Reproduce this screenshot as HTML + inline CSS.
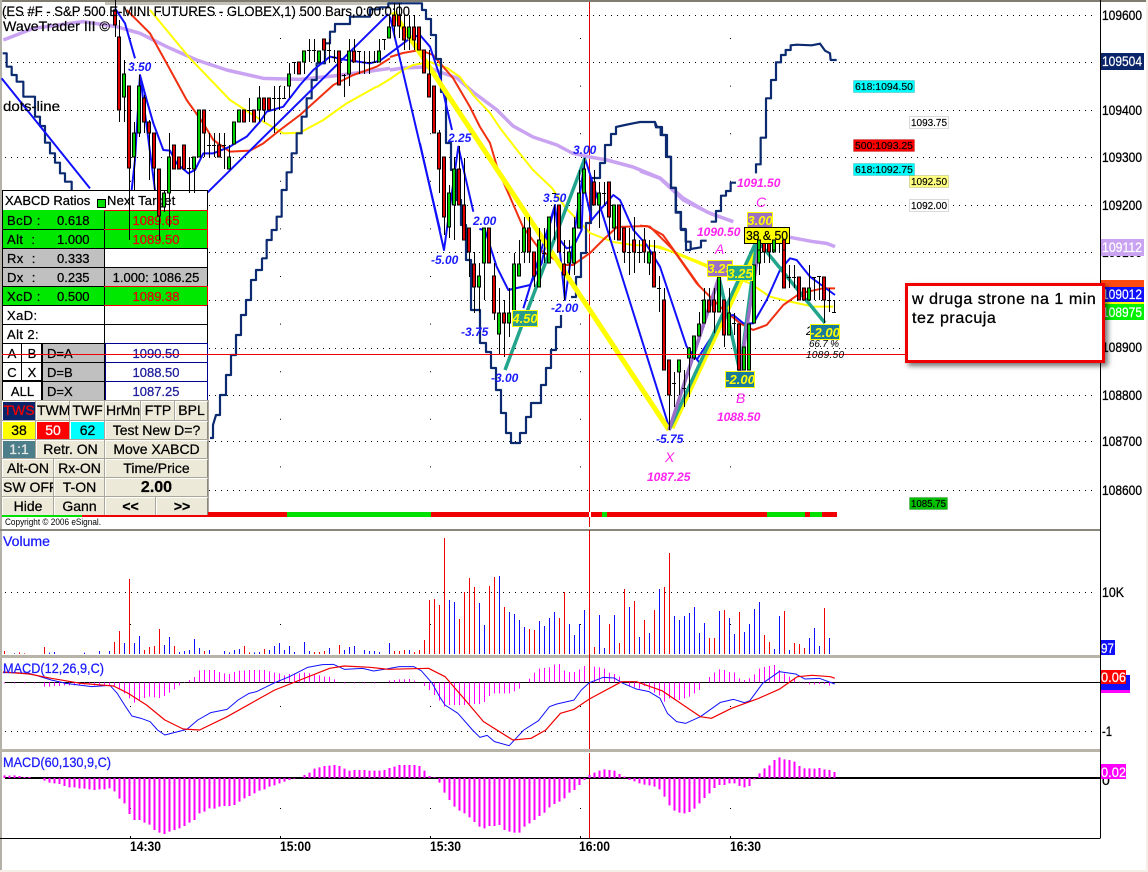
<!DOCTYPE html>
<html><head><meta charset="utf-8"><title>Chart</title>
<style>
html,body{margin:0;padding:0;background:#fff}
#p{position:relative;width:1148px;height:872px;overflow:hidden;background:#fff;font-family:"Liberation Sans",sans-serif;color:#000}
svg{position:absolute;left:0;top:0}
svg text{font-family:"Liberation Sans",sans-serif}
.l{vector-effect:non-scaling-stroke;fill:none;stroke-linejoin:round}
.c,.r,.b,.t{position:absolute;box-sizing:border-box;font-size:13px;line-height:18px;white-space:nowrap;-webkit-text-stroke:.25px #000}
.c{text-align:center}
.r{border:1px solid #000;border-width:0 0 1px 0}
.b{background:#ece9d8;border:1px solid;border-color:#fff #8a887c #8a887c #fff;text-align:center;overflow:hidden;outline:1px solid #aaa79a;outline-offset:0;font-size:14px;line-height:17px}
</style></head><body><div id="p">
<svg width="1148" height="872" viewBox="0 0 1148 872">
<rect x="0" y="0" width="1148" height="2" fill="#807c70"/>
<rect x="105" y="2" width="297" height="3" fill="#c4c2b8"/>
<rect x="0" y="0" width="2" height="872" fill="#b4b2a8"/>
<rect x="1146" y="0" width="2" height="872" fill="#f6efe8"/>
<rect x="0" y="870" width="1148" height="2" fill="#f6efe8"/>
<g stroke="#000" stroke-width="1" stroke-dasharray="1 5" fill="none">
<path d="M5 62.5H1095M5 110.5H1095M5 157.5H1095M5 205.5H1095M5 252.5H1095M5 300.5H1095M5 348.5H1095M5 395.5H1095M5 441.5H1095M5 490.5H1095M5 15.5H1095M5 592.5H1095M5 731.5H1095"/>
</g>
<g stroke="#000" stroke-width="1" stroke-dasharray="1 46.6" fill="none">
<path d="M130.5 38V510M280.5 38V510M430.5 38V510M580.5 38V510M730.5 38V510"/>
</g>
<path d="M130.5 624v1M280.5 624v1M430.5 624v1M580.5 624v1M730.5 624v1M130.5 706v1M280.5 706v1M430.5 706v1M580.5 706v1M730.5 706v1M130.5 808v1M280.5 808v1M430.5 808v1M580.5 808v1M730.5 808v1M130.5 836v2M280.5 836v2M430.5 836v2M580.5 836v2M730.5 836v2" stroke="#000"/>
<!-- panes -->
<rect x="0" y="529" width="1100" height="2" fill="#8a887c"/>
<rect x="0" y="655" width="1100" height="3" fill="#b8b5a8"/>
<rect x="0" y="749" width="1100" height="3" fill="#b8b5a8"/>
<path d="M0 838.5H1100.5M1100.5 0V838" stroke="#000" fill="none"/>
<path d="M589.5 2V527M589.5 530V749M589.5 753V838" stroke="#e00000"/>
<path d="M5 682.5H1100" stroke="#000"/>
<rect x="5" y="777" width="1095" height="2" fill="#000"/>

<!-- lavender MA -->
<g transform="scale(.33333)"><path class="l" stroke="#c9a2f2" stroke-width="3.5" d="M10 120L100 85 250 65 350 80 420 100 500 140 590 180 680 210 790 235 900 238 1000 228 1100 215 1170 205"/></g>
<path class="l" stroke="#c9a2f2" stroke-width="3.5" d="M390 70L403 68 427 67 440 72 457 78 473 92 497 110 513 126 533 137 557 145 572 153 590 157 607 160 633 167 660 178 683 198 707 212 720 217"/>
<g transform="translate(640 30) scale(.33333)"><path class="l" stroke="#c9a2f2" stroke-width="3.5" d="M0 423L60 445 130 510 210 550 280 575M450 622L520 635 560 640 585 650"/></g>
<!-- yellow MA -->
<g transform="scale(.33333)"><path class="l" stroke="#ffff00" stroke-width="2" d="M450 30L570 175 690 300 790 365 850 400 900 398 970 360 1040 310 1130 260"/></g>
<path class="l" stroke="#ffff00" stroke-width="2" d="M377 87L390 79 403 70 413 65 430 62 447 68 460 77 473 95 490 113 500 128 517 150 533 170 552 188 565 207 590 233 613 242 633 245 653 246 677 253 707 265"/>
<g transform="translate(640 30) scale(.33333)"><path class="l" stroke="#ffff00" stroke-width="2" d="M0 645L60 650 130 680 200 710 330 760 390 800 450 815 520 830 580 830"/></g>
<!-- orange MA -->
<g transform="scale(.33333)"><path class="l" stroke="#f03010" stroke-width="2" d="M380 30L450 100 500 190 560 300 610 370 640 420 690 455 750 452 790 430 840 390 900 345 950 300 1000 255 1060 225 1130 200 1170 175"/></g>
<path class="l" stroke="#f03010" stroke-width="2" d="M390 57L403 53 420 50 433 55 453 78 470 107 480 127 490 143 498 170 510 197 523 227 540 250 563 265 573 265 590 253 603 240 617 227 647 226 663 235 683 263 700 287"/>
<g transform="translate(640 30) scale(.33333)"><path class="l" stroke="#f03010" stroke-width="2" d="M0 587L30 590 100 660 170 760 240 830 300 880 340 900 380 885 430 825 480 790 550 775 585 775"/></g>
<!-- navy stepped -->
<g transform="scale(.33333)"><path class="l" stroke="#0c2a70" stroke-width="2.2" d="M8 160H20V200H35V225H50V245H70V290H105V350H120V378H135V428H150V460H165V488H180V520H195V545H215V570M785 775H800V720H815V690H830V650H845V570H860V517H875V460H890V400H905V350H920V295H935V240H950V190H975V130H990V95H1005V72H1050V50H1110V28H1140V22H1165V10H1266V30H1278V57H1293V105H1308V177H1323V276H1338"/></g>
<path class="l" stroke="#0c2a70" stroke-width="2.2" d="M210 438H213V425L216 415H220V395H226V375H231V355H236V335H241V315H246V300H251V280H256V270H262V258"/>
<path class="l" stroke="#0c2a70" stroke-width="2.2" d="M446 92V143H451V170H456V200H461V225H466V260H471V310H480V343H486V352H491V368H496V390H501V413H506V433H511V443H520V433H526V417H531V403H541V385H546V368H551V350H556V327H561V315M571 297H576V277H581V253H586V223H591V178H600V163H605V145H611V134H616V127L625 125 640 122H655L657 127H662V135H667V157H671V188H676V212H681V230H686V250H691V250"/>
<g transform="translate(640 30) scale(.33333)"><path class="l" stroke="#0c2a70" stroke-width="2.2" d="M45 280L48 292H62V315H78V380H93V473H107V548H122V597H137V635H152V657L183 652V632H200M212 575H228V543H243V497H258V483H272V458H288M348 430V403H362V323H378V205H393V150H408V97H423V75H437V60H452V46L470 44 515 46 540 41 555 62 570 70 572 90H590"/></g>
<!-- blue zigzag / MA -->
<g transform="scale(.33333)"><path class="l" stroke="#1010ff" stroke-width="2" d="M5 235L270 565M622 578L1165 42M345 25L375 70 405 175M420 225L465 570M395 570L405 480 420 225 440 300 460 370 490 450 510 452 530 490 565 520 585 510 610 460 640 460 690 440 705 430 740 410 780 365 800 335 850 320 900 255 940 210 990 170 1040 180 1110 190 1140 182 1170 160 1230 115 1260 105 1290 140 1320 230 1335 300 1356 390M1170 50L1320 690"/></g>
<g transform="translate(420 130) scale(.33333)"><path class="l" stroke="#1010ff" stroke-width="2" d="M0 40L72 360 115 50 160 245M178 297L195 300 230 410 265 480 330 465 365 400 385 300 405 230 420 330 440 355 460 350 485 300 490 160 515 270 540 240 580 195 600 210 640 300 680 345 720 410 760 530 800 650 840 700M310 535L405 225 435 510 495 85 750 900"/></g>
<g transform="translate(640 30) scale(.33333)"><path class="l" stroke="#1010ff" stroke-width="2" d="M90 1195L240 740M170 990L215 920 250 860 280 855 310 880 340 880 380 810 420 720 450 685 470 690 510 740 585 795"/></g>
<!-- pattern lines -->
<path class="l" stroke="#ffff00" stroke-width="5" d="M393 12L669 430"/>
<path class="l" stroke="#ffff00" stroke-width="5" d="M672 428L758 245"/>
<path class="l" stroke="#22a58c" stroke-width="3.5" d="M505 370L585 158M669 430L757 240M719 277L740 372 757 240M757 240L825 323"/>
<path class="l" stroke="#9b6fc4" stroke-width="3.5" d="M669 430L719 277M740 372L760 240"/>
</svg>

<!-- table -->
<div style="position:absolute;left:2px;top:190px;width:206px;height:211px;background:#fff;border:1px solid #000;box-sizing:border-box"></div>
<div class="t" style="left:5px;top:192px">XABCD Ratios</div>
<div style="position:absolute;left:97px;top:199px;width:7px;height:7px;background:#00e000;border:1px solid #000"></div>
<div class="t" style="left:107px;top:192px;letter-spacing:.2px">Next Target</div>
<div style="position:absolute;left:3px;top:210px;width:101px;height:38px;background:#00e800"></div>
<div style="position:absolute;left:105px;top:210px;width:102px;height:38px;background:#00e800"></div>
<div style="position:absolute;left:3px;top:248px;width:101px;height:38px;background:#c0c0c0"></div>
<div style="position:absolute;left:105px;top:267px;width:102px;height:19px;background:#c0c0c0"></div>
<div style="position:absolute;left:3px;top:286px;width:101px;height:19px;background:#00e800"></div>
<div style="position:absolute;left:105px;top:286px;width:102px;height:19px;background:#00e800"></div>
<div style="position:absolute;left:43px;top:343px;width:61px;height:57px;background:#c0c0c0"></div>
<svg width="1148" height="872" viewBox="0 0 1148 872">
<path d="M3 229.5H104M3 248.5H207M3 267.5H207M3 286.5H207M3 305.5H207M3 324.5H207M3 343.5H207M3 362.5H104M3 381.5H104M3 400.5H207M104.5 210V400M21.5 343V381" stroke="#000" fill="none"/>
<path d="M104 210.5H207M104 229.5H207M104 286.5H207M104 305.5H207M207.5 210V248M207.5 286V305" stroke="#f00000" fill="none"/>
<path d="M105 343.5H207M105 362.5H207M105 381.5H207M105 400.5H207M207.5 343V400M105.5 343V400" stroke="#00008b" fill="none"/>
<path d="M42 343V400M3 381H42" stroke="#000" stroke-width="2" fill="none"/>
</svg>
<div class="t" style="left:7px;top:212px;letter-spacing:.4px">BcD :</div><div class="t" style="left:57px;top:212px">0.618</div>
<div class="t" style="left:7px;top:231px;letter-spacing:.4px">Alt&nbsp;&nbsp;:</div><div class="t" style="left:57px;top:231px">1.000</div>
<div class="t" style="left:7px;top:250px;letter-spacing:.4px">Rx&nbsp;&nbsp;:</div><div class="t" style="left:57px;top:250px">0.333</div>
<div class="t" style="left:7px;top:269px;letter-spacing:.4px">Dx&nbsp;&nbsp;:</div><div class="t" style="left:57px;top:269px">0.235</div>
<div class="t" style="left:7px;top:288px;letter-spacing:.4px">XcD :</div><div class="t" style="left:57px;top:288px">0.500</div>
<div class="t" style="left:7px;top:307px;letter-spacing:.4px">XaD:</div>
<div class="t" style="left:7px;top:326px;letter-spacing:.4px">Alt 2:</div>
<div class="c" style="left:105px;width:102px;top:212px;color:#f00000;-webkit-text-stroke:.25px #e00000">1089.65</div>
<div class="c" style="left:105px;width:102px;top:231px;color:#f00000;-webkit-text-stroke:.25px #e00000">1089.50</div>
<div class="c" style="left:105px;width:102px;top:269px">1.000: 1086.25</div>
<div class="c" style="left:105px;width:102px;top:288px;color:#f00000;-webkit-text-stroke:.25px #e00000">1089.38</div>
<div class="c" style="left:105px;width:102px;top:345px;color:#1a1a9a;-webkit-text-stroke:.25px #1a1a9a">1090.50</div>
<div class="c" style="left:105px;width:102px;top:364px;color:#1a1a9a;-webkit-text-stroke:.25px #1a1a9a">1088.50</div>
<div class="c" style="left:105px;width:102px;top:383px;color:#1a1a9a;-webkit-text-stroke:.25px #1a1a9a">1087.25</div>
<div class="c" style="left:3px;width:18px;top:345px">A</div><div class="c" style="left:22px;width:20px;top:345px">B</div>
<div class="c" style="left:3px;width:18px;top:364px">C</div><div class="c" style="left:22px;width:20px;top:364px">X</div>
<div class="c" style="left:3px;width:39px;top:383px">ALL</div>
<div class="t" style="left:47px;top:345px">D=A</div><div class="t" style="left:47px;top:364px">D=B</div><div class="t" style="left:47px;top:383px">D=X</div>

<!-- buttons -->
<div class="b" style="left:2px;top:401px;width:34px;height:20px;background:#0a246a;color:#f00000;-webkit-text-stroke:.25px #f00000">TWS</div>
<div class="b" style="left:36px;top:401px;width:34px;height:20px">TWM</div>
<div class="b" style="left:70px;top:401px;width:35px;height:20px">TWF</div>
<div class="b" style="left:105px;top:401px;width:36px;height:20px">HrMn</div>
<div class="b" style="left:141px;top:401px;width:34px;height:20px">FTP</div>
<div class="b" style="left:175px;top:401px;width:33px;height:20px">BPL</div>
<div class="b" style="left:2px;top:421px;width:34px;height:19px;background:#ffff00">38</div>
<div class="b" style="left:36px;top:421px;width:34px;height:19px;background:#ff0000;color:#fff;-webkit-text-stroke:.25px #fff">50</div>
<div class="b" style="left:70px;top:421px;width:35px;height:19px;background:#00ffff">62</div>
<div class="b" style="left:105px;top:421px;width:103px;height:19px">Test New D=?</div>
<div class="b" style="left:2px;top:440px;width:34px;height:19px;background:#4d7f8a;color:#e8e8e8;-webkit-text-stroke:.25px #e8e8e8">1:1</div>
<div class="b" style="left:36px;top:440px;width:69px;height:19px">Retr. ON</div>
<div class="b" style="left:105px;top:440px;width:103px;height:19px">Move XABCD</div>
<div class="b" style="left:2px;top:459px;width:52px;height:19px">Alt-ON</div>
<div class="b" style="left:54px;top:459px;width:51px;height:19px">Rx-ON</div>
<div class="b" style="left:105px;top:459px;width:103px;height:19px">Time/Price</div>
<div class="b" style="left:2px;top:478px;width:52px;height:19px">SW OFF</div>
<div class="b" style="left:54px;top:478px;width:51px;height:19px">T-ON</div>
<div class="b" style="left:105px;top:478px;width:103px;height:19px;font-size:16px;font-weight:bold">2.00</div>
<div class="b" style="left:2px;top:497px;width:52px;height:19px">Hide</div>
<div class="b" style="left:54px;top:497px;width:51px;height:19px">Gann</div>
<div class="b" style="left:105px;top:497px;width:51px;height:19px;font-weight:bold">&lt;&lt;</div>
<div class="b" style="left:156px;top:497px;width:52px;height:19px;font-weight:bold">&gt;&gt;</div>

<svg width="1148" height="872" viewBox="0 0 1148 872">
<!-- candles -->
<path stroke="#000" fill="none" d="M115.5 0V37M119.5 20V122M124.5 60V122M129.5 86V240M134.5 122V190M139.5 75V137M144.5 95V133M149.5 120V180M154.5 133V190M159.5 169V240M164.5 190V212M169.5 133V227M174.5 145V169M179.5 157V169M184.5 145V169M189.5 157V193M194.5 157V193M199.5 110V157M204.5 110V157M209.5 133V157M214.5 133V157M219.5 133V157M224.5 133V169M229.5 145V169M234.5 122V144M239.5 110V122M244.5 110V122M249.5 98V122M254.5 110V122M259.5 86V122M264.5 98V122M269.5 98V110M274.5 86V133M279.5 86V110M284.5 86V98M289.5 63V98M294.5 62V74M299.5 62V74M304.5 51V74M309.5 39V62M314.5 39V62M319.5 51V62M324.5 39V62M329.5 39V62M334.5 50V62M339.5 51V85M344.5 74V97M349.5 39V86M354.5 39V62M359.5 51V74M364.5 51V74M369.5 51V74M374.5 51V62M379.5 39V62M384.5 39V50M389.5 15V38M394.5 3V38M399.5 3V38M404.5 15V50M409.5 15V50M414.5 15V50M419.5 27V50M424.5 50V73M429.5 50V97M434.5 86V133M439.5 130V193M444.5 157V235M449.5 185V238M454.5 157V240M459.5 146V205M464.5 158V240M469.5 228V277M474.5 252V313M479.5 263V313M484.5 228V300M489.5 228V263M494.5 263V320M499.5 288V355M504.5 300V357M509.5 288V337M514.5 253V323M519.5 240V276M524.5 217V263M529.5 217V263M534.5 252V287M539.5 228V287M544.5 228V263M549.5 217V263M554.5 205V240M559.5 205V252M564.5 240V300M569.5 240V275M574.5 217V275M579.5 170V228M584.5 158V193M594.5 170V205M599.5 182V228M604.5 182V205M609.5 182V240M614.5 205V240M619.5 205V240M624.5 228V263M629.5 228V275M634.5 217V273M639.5 240V263M644.5 228V263M649.5 240V275M654.5 240V287M659.5 276V312M664.5 288V370M669.5 360V430M674.5 372V407M679.5 360V395M684.5 370V407M689.5 347V397M694.5 336V360M699.5 312V336M704.5 288V323M709.5 288V312M714.5 288V333M719.5 277V312M724.5 300V347M729.5 288V335M734.5 313V335M739.5 324V370M744.5 347V370M749.5 324V370M754.5 265V323M759.5 230V275M764.5 228V263M769.5 240V263M774.5 240V252M779.5 228V252M784.5 240V288M789.5 265V288M794.5 265V288M799.5 277V300M804.5 288V300M809.5 265V300M814.5 277V300M819.5 276V300M824.5 277V323M829.5 288V312M834.5 300V312"/>
<path stroke="#000" fill="#e00000" d="M113.5 10h3v15h-3zM117.5 37h3v73h-3zM127.5 86h3v82h-3zM142.5 98h3v24h-3zM147.5 122h3v11h-3zM152.5 133h3v35h-3zM157.5 169h3v47h-3zM172.5 145h3v24h-3zM177.5 157h3v12h-3zM182.5 145h3v24h-3zM202.5 110h3v23h-3zM217.5 145h3v12h-3zM242.5 110h3v12h-3zM252.5 110h3v12h-3zM262.5 98h3v12h-3zM267.5 98h3v12h-3zM297.5 62h3v12h-3zM322.5 39h3v11h-3zM337.5 51h3v34h-3zM352.5 51h3v11h-3zM392.5 15h3v11h-3zM397.5 15h3v11h-3zM402.5 27h3v13h-3zM412.5 27h3v13h-3zM417.5 27h3v23h-3zM422.5 50h3v23h-3zM427.5 74h3v23h-3zM432.5 86h3v47h-3zM437.5 133h3v36h-3zM442.5 157h3v60h-3zM457.5 169h3v36h-3zM462.5 205h3v35h-3zM467.5 228h3v24h-3zM472.5 264h3v23h-3zM487.5 228h3v35h-3zM492.5 276h3v37h-3zM502.5 313h3v10h-3zM527.5 228h3v24h-3zM532.5 252h3v24h-3zM557.5 205h3v47h-3zM562.5 264h3v11h-3zM592.5 182h3v23h-3zM607.5 182h3v35h-3zM617.5 205h3v35h-3zM622.5 228h3v24h-3zM632.5 240h3v12h-3zM642.5 240h3v12h-3zM652.5 252h3v35h-3zM662.5 300h3v70h-3zM667.5 360h3v35h-3zM707.5 300h3v12h-3zM712.5 300h3v12h-3zM722.5 300h3v35h-3zM737.5 324h3v46h-3zM762.5 240h3v12h-3zM767.5 240h3v12h-3zM782.5 240h3v48h-3zM797.5 277h3v23h-3zM802.5 288h3v12h-3zM822.5 277h3v23h-3z"/>
<path stroke="#000" fill="#00d000" d="M122.5 74h3v23h-3zM132.5 133h3v24h-3zM137.5 86h3v47h-3zM162.5 193h3v14h-3zM167.5 157h3v36h-3zM192.5 157h3v12h-3zM197.5 110h3v47h-3zM227.5 157h3v12h-3zM232.5 122h3v22h-3zM237.5 110h3v12h-3zM257.5 98h3v12h-3zM287.5 74h3v12h-3zM302.5 51h3v11h-3zM317.5 51h3v11h-3zM347.5 51h3v23h-3zM377.5 51h3v11h-3zM387.5 27h3v11h-3zM407.5 27h3v11h-3zM447.5 193h3v34h-3zM452.5 169h3v36h-3zM477.5 276h3v11h-3zM482.5 228h3v35h-3zM497.5 313h3v21h-3zM507.5 313h3v10h-3zM512.5 264h3v48h-3zM517.5 264h3v12h-3zM522.5 228h3v24h-3zM537.5 240h3v47h-3zM547.5 217h3v46h-3zM567.5 252h3v11h-3zM572.5 228h3v35h-3zM577.5 193h3v35h-3zM582.5 169h3v24h-3zM597.5 193h3v12h-3zM612.5 205h3v23h-3zM647.5 252h3v11h-3zM677.5 360h3v12h-3zM687.5 348h3v10h-3zM692.5 336h3v22h-3zM697.5 324h3v12h-3zM702.5 300h3v23h-3zM717.5 277h3v35h-3zM727.5 313h3v22h-3zM742.5 347h3v23h-3zM747.5 324h3v46h-3zM752.5 265h3v58h-3zM757.5 240h3v23h-3zM772.5 240h3v12h-3zM807.5 288h3v12h-3z"/>
<path stroke="#000" fill="none" d="M187 168.5h4M207 145.5h4M212 145.5h4M222 145.5h4M247 110.5h4M272 98.5h4M277 98.5h4M282 98.5h4M292 62.5h4M307 50.5h4M312 50.5h4M327 50.5h4M332 57.5h4M342 75.5h4M357 51.5h4M362 62.5h4M367 62.5h4M372 62.5h4M382 39.5h4M542 253.5h4M552 193.5h4M602 193.5h4M627 252.5h4M637 252.5h4M657 288.5h4M672 383.5h4M682 388.5h4M732 323.5h4M777 243.5h4M787 277.5h4M792 277.5h4M812 277.5h4M817 276.5h4M827 300.5h4M832 312.5h4"/>
<!-- red horizontal -->
<path d="M2 354.5H906" stroke="#f00000"/>
<!-- bottom strip -->
<rect x="2" y="515" width="80" height="2" fill="#00e000"/><rect x="82" y="515" width="126" height="2" fill="#f00000"/>
<rect x="208" y="512" width="79" height="5" fill="#f00000"/><rect x="287" y="512" width="144" height="5" fill="#00e000"/><rect x="431" y="512" width="158" height="5" fill="#f00000"/><rect x="589" y="512" width="2" height="5" fill="#fff"/><rect x="591" y="512" width="11" height="5" fill="#f00000"/><rect x="602" y="512" width="5" height="5" fill="#00e000"/><rect x="607" y="512" width="160" height="5" fill="#f00000"/><rect x="767" y="512" width="38" height="5" fill="#00e000"/><rect x="805" y="512" width="5" height="5" fill="#f00000"/><rect x="810" y="512" width="12" height="5" fill="#00e000"/><rect x="822" y="512" width="15" height="5" fill="#f00000"/>
<text x="5" y="525" font-size="9.5" textLength="96" lengthAdjust="spacingAndGlyphs">Copyright © 2006 eSignal.</text>

<!-- volume -->
<g transform="translate(4.5 530) scale(5 .33333)">
<path class="l" stroke="#f00000" stroke-width="1" d="M0 363V372M3 367V372M4 370V372M8 351V372M22 336V372M23 303V372M25 147V372M28 360V372M29 351V372M30 348V372M31 297V372M34 348V372M40 363V372M48 348V372M49 367V372M52 357V372M62 366V372M63 366V372M64 363V372M67 345V372M78 363V372M79 363V372M80 360V372M82 366V372M83 360V372M84 330V372M85 210V372M86 207V372M87 225V372M88 24V372M91 267V372M92 186V372M93 144V372M94 171V372M97 168V372M98 141V372M100 231V372M105 297V372M106 300V372M111 264V372M112 186V372M117 9V372M118 351V372M121 282V372M123 339V372M124 177V372M126 213V372M128 270V372M130 240V372M132 171V372M133 69V372M141 324V372M142 324V372M144 240V372M147 246V372M152 315V372M153 336V372M156 243V372M158 339V372M159 342V372M160 354V372M164 234V372"/>
<path class="l" stroke="#1010ff" stroke-width="1" d="M2 370V372M9 368V372M10 366V372M16 368V372M19 363V372M21 363V372M24 339V372M26 339V372M27 318V372M32 345V372M33 321V372M35 366V372M36 363V372M37 360V372M38 327V372M39 354V372M41 360V372M44 363V372M45 367V372M46 360V372M47 357V372M50 367V372M51 366V372M53 360V372M54 348V372M55 339V372M56 360V372M57 348V372M58 366V372M60 336V372M61 363V372M65 354V372M68 360V372M69 351V372M70 348V372M72 360V372M73 363V372M74 363V372M75 366V372M77 339V372M81 360V372M89 210V372M90 216V372M95 219V372M96 285V372M99 138V372M101 246V372M102 252V372M103 270V372M104 291V372M107 273V372M108 288V372M109 264V372M110 246V372M113 282V372M114 315V372M115 282V372M116 240V372M119 255V372M120 354V372M122 255V372M125 231V372M127 321V372M129 309V372M131 177V372M134 258V372M135 270V372M136 258V372M137 249V372M138 231V372M139 309V372M140 279V372M143 243V372M145 264V372M146 312V372M148 306V372M149 282V372M150 237V372M151 216V372M154 357V372M155 258V372M157 360V372M161 324V372M162 294V372M163 348V372M165 324V372"/>
<!-- macd1 hist -->
<path class="l" stroke="#ff00ff" stroke-width="1" d="M0 460V457M2 460V457M4 460V457M6 460V457M8 470V457M9 470V457M10 468V457M11 468V457M12 466V457M13 466V457M14 466V457M15 466V457M16 464V457M17 464V457M18 466V457M19 466V457M20 466V457M21 466V457M22 470V457M23 478V457M24 490V457M25 505V457M26 518V457M27 510V457M28 504V457M29 500V457M30 502V457M31 504V457M32 498V457M33 488V457M34 478V457M35 466V457M36 459V457M37 450V457M38 441V457M39 421V457M40 420V457M41 420V457M42 420V457M43 426V457M44 430V457M45 432V457M46 426V457M47 422V457M48 422V457M49 420V457M50 420V457M51 420V457M52 420V457M53 424V457M54 428V457M55 430V457M56 436V457M57 432V457M58 430V457M59 430V457M60 428V457M61 430V457M62 434V457M63 436V457M64 440V457M65 440V457M66 448V457M68 460V457M70 460V457M72 460V457M74 460V457M77 452V457M78 450V457M79 448V457M80 448V457M81 447V457M82 452V457M84 468V457M85 480V457M86 495V457M87 512V457M88 530V457M89 525V457M90 525V457M91 525V457M92 525V457M93 522V457M94 522V457M95 522V457M96 516V457M97 498V457M98 490V457M99 490V457M100 490V457M101 490V457M102 484V457M103 476V457M105 446V457M106 428V457M107 416V457M108 414V457M109 412V457M110 404V457M111 402V457M112 422V457M113 426V457M114 426V457M115 418V457M116 408V457M118 410V457M119 412V457M120 416V457M121 428V457M122 432V457M123 440V457M125 470V457M126 472V457M127 476V457M128 468V457M129 478V457M130 488V457M131 496V457M132 515V457M133 505V457M134 510V457M135 510V457M136 505V457M137 500V457M138 490V457M139 480V457M141 441V457M142 428V457M143 418V457M144 420V457M145 426V457M146 428V457M147 445V457M148 450V457M149 445V457M150 433V457M151 416V457M152 411V457M153 408V457M154 405V457M155 420V457M156 430V457M157 440V457M158 445V457M159 455V457M160 460V457M161 463V457M162 464V457M163 462V457M164 462V457M165 467V457"/>
<!-- macd2 hist -->
<path class="l" stroke="#ff00ff" stroke-width="2" d="M0 736V744M1 737V744M2 736V744M3 738V744M4 741V744M5 741V744M8 752V744M9 758V744M10 760V744M11 762V744M12 768V744M13 772V744M14 772V744M15 775V744M16 776V744M17 778V744M18 780V744M19 778V744M20 778V744M21 775V744M22 784V744M23 806V744M24 820V744M25 852V744M26 870V744M27 870V744M28 878V744M29 884V744M30 900V744M31 908V744M32 912V744M33 905V744M34 900V744M35 895V744M36 888V744M37 878V744M38 870V744M39 850V744M40 845V744M41 835V744M42 836V744M43 830V744M44 828V744M45 828V744M46 825V744M47 815V744M48 805V744M49 798V744M50 790V744M51 782V744M52 778V744M53 770V744M54 766V744M55 760V744M56 755V744M57 750V744M58 746V744M60 735V744M61 728V744M62 716V744M63 712V744M64 708V744M65 707V744M66 705V744M67 708V744M68 716V744M69 722V744M70 720V744M71 720V744M72 720V744M73 722V744M74 722V744M75 722V744M76 720V744M77 714V744M78 710V744M79 705V744M80 705V744M81 705V744M82 705V744M83 708V744M84 722V744M85 738V744M86 742V744M87 758V744M88 788V744M89 810V744M90 830V744M91 842V744M92 850V744M93 862V744M94 876V744M95 890V744M96 895V744M97 888V744M98 888V744M99 885V744M100 900V744M101 905V744M102 908V744M103 908V744M104 890V744M105 880V744M106 870V744M107 858V744M108 848V744M109 832V744M110 822V744M111 815V744M112 805V744M113 788V744M114 780V744M115 765V744M116 750V744M117 735V744M118 728V744M119 722V744M120 718V744M121 720V744M122 722V744M123 732V744M124 740V744M125 750V744M126 754V744M127 760V744M128 764V744M129 766V744M130 770V744M131 778V744M132 800V744M133 826V744M134 842V744M135 848V744M136 850V744M137 846V744M138 836V744M139 820V744M140 804V744M141 790V744M142 774V744M143 765V744M144 765V744M145 760V744M146 760V744M147 768V744M148 772V744M149 768V744M150 748V744M151 730V744M152 715V744M153 706V744M154 690V744M155 682V744M156 688V744M157 690V744M158 695V744M159 708V744M160 715V744M161 715V744M162 716V744M163 714V744M164 718V744M165 720V744M166 726V744"/>
</g>
<g transform="translate(0 530) scale(.3663 .33333)">
<path class="l" stroke="#1010ff" stroke-width="1" d="M8 428L40 428 80 430 110 440 140 450 180 460 250 470 300 466 320 490 340 525 360 558 385 565 410 575 430 600 450 615 475 608 510 598 540 570 575 548 620 538 650 510 680 490 700 485 750 458 790 440 840 412 880 404 910 403 940 418 990 415 1020 423 1060 416 1090 410 1130 410 1150 422 1180 460 1200 500 1215 525 1250 550 1290 600 1310 622 1330 616 1350 635 1390 647 1430 600 1470 572 1500 530 1520 522 1568 510"/>
<path class="l" stroke="#f00000" stroke-width="1.2" d="M8 426L80 432 140 445 220 460 310 468 350 490 400 525 450 570 500 597 545 600 620 560 750 480 900 415 940 408 1010 412 1060 418 1170 415 1215 440 1270 510 1320 575 1400 630 1450 625 1490 600 1530 550 1568 538"/>
</g>
<g transform="translate(574 530) scale(.3663 .33333)">
<path class="l" stroke="#1010ff" stroke-width="1" d="M0 510L20 480 42 458 80 442 110 444 130 458 170 477 205 485 235 505 255 550 280 575 305 580 345 560 400 517 435 508 465 518 480 512 515 460 560 425 605 432 630 447 670 445 712 462"/>
<path class="l" stroke="#f00000" stroke-width="1.2" d="M0 538L42 507 130 455 170 455 240 482 345 560 375 565 430 535 500 507 560 478 610 440 650 436 700 440 712 445"/>
</g>

<!-- chart text -->
<g font-size="14" style="stroke:#000;stroke-width:.2">
<text x="2" y="16" textLength="408" lengthAdjust="spacingAndGlyphs">(ES #F - S&amp;P 500 E-MINI FUTURES - GLOBEX,1) 500 Bars,0:00:0:00</text>
<text x="3" y="31" textLength="107" lengthAdjust="spacingAndGlyphs">WaveTrader III ©</text>
<text x="3" y="111" textLength="57" lengthAdjust="spacingAndGlyphs">dots-line</text>
</g>
<g font-size="12" font-style="italic" font-weight="bold" fill="#1a1aff">
<text x="128" y="71">3.50</text><text x="448" y="142">2.25</text><text x="431" y="264">-5.00</text><text x="473" y="225">2.00</text><text x="461" y="336">-3.75</text><text x="491" y="382">-3.00</text><text x="543" y="202">3.50</text><text x="573" y="154">3.00</text><text x="551" y="312">-2.00</text><text x="656" y="443">-5.75</text>
</g>
<g font-size="12" font-style="italic" font-weight="bold" fill="#ff22ee">
<text x="647" y="481">1087.25</text><text x="737" y="187">1091.50</text><text x="697" y="236">1090.50</text><text x="717" y="421">1088.50</text>
</g>
<g font-size="14" font-style="italic" fill="#ff22ee">
<text x="665" y="462">X</text><text x="756" y="207">C</text><text x="715" y="254">A</text><text x="736" y="403">B</text>
</g>
<!-- pattern labels -->
<g font-size="13" font-style="italic" font-weight="bold" fill="#ffff00" text-anchor="middle">
<rect x="512.5" y="310.5" width="25" height="16" fill="#2a9a8a" stroke="#ffff00"/><text x="525" y="323">4.50</text>
<rect x="707.5" y="260.5" width="25" height="16" fill="#9b6fc4" stroke="#ffff00"/><text x="720" y="273">3.25</text>
<rect x="727.5" y="265.5" width="25" height="15" fill="#22a58c" stroke="#ffff00"/><text x="740" y="278">3.25</text>
<rect x="747.5" y="212.5" width="25" height="15" fill="#9b6fc4" stroke="#ffff00"/><text x="760" y="225">3.00</text>
<rect x="725.5" y="371.5" width="29" height="16" fill="#1a7a9a" stroke="#ffff00"/><text x="740" y="384">-2.00</text>
</g>
<g font-size="10" font-style="italic" fill="#000">
<text x="806" y="335" font-size="12">2.00</text>
</g>
<g font-size="13" font-style="italic" font-weight="bold" fill="#ffff00" text-anchor="middle">
<rect x="810.5" y="324.5" width="29" height="15" fill="#1a7a9a" stroke="#ffff00"/><text x="825" y="337">-2.00</text>
</g>
<text x="809" y="347" font-size="10" font-style="italic" textLength="30">66.7 %</text>
<text x="806" y="358" font-size="10" font-style="italic" textLength="38">1089.50</text>
<rect x="744.5" y="227.5" width="45" height="16" fill="#ffff00" stroke="#000"/>
<text x="746" y="240" font-size="13" textLength="42" lengthAdjust="spacingAndGlyphs" style="stroke:#000;stroke-width:.2">38 &amp; 50</text>
<path stroke="#000" fill="#e00000" d="M782.5 240h3v10h-3z"/><path stroke="#000" fill="#00d000" d="M772.5 240h3v10h-3zM757.5 240h3v10h-3z"/>

<!-- fib boxes -->
<g font-size="10" style="stroke:#000;stroke-width:.15">
<rect x="853.5" y="80.5" width="61" height="12" fill="#00ffff" stroke="#000"/><text x="855" y="90" textLength="58" lengthAdjust="spacingAndGlyphs">618:1094.50</text>
<rect x="909.5" y="116.5" width="39" height="12" fill="#fff" stroke="#000"/><text x="911" y="126" textLength="36" lengthAdjust="spacingAndGlyphs">1093.75</text>
<rect x="853.5" y="139.5" width="61" height="12" fill="#ff0000" stroke="#000"/><text x="855" y="149" textLength="58" lengthAdjust="spacingAndGlyphs">500:1093.25</text>
<rect x="853.5" y="163.5" width="61" height="12" fill="#00ffff" stroke="#000"/><text x="855" y="173" textLength="58" lengthAdjust="spacingAndGlyphs">618:1092.75</text>
<rect x="909.5" y="175.5" width="39" height="12" fill="#ffff80" stroke="#000"/><text x="911" y="185" textLength="36" lengthAdjust="spacingAndGlyphs">1092.50</text>
<rect x="909.5" y="199.5" width="39" height="12" fill="#fff" stroke="#000"/><text x="911" y="209" textLength="36" lengthAdjust="spacingAndGlyphs">1092.00</text>
<rect x="909.5" y="497.5" width="38" height="12" fill="#00c000" stroke="#000"/><text x="911" y="507" textLength="35" lengthAdjust="spacingAndGlyphs">1085.75</text>
</g>

<!-- axis -->
<g font-size="14" style="stroke:#000;stroke-width:.3">
<text x="1102" y="20" textLength="40" lengthAdjust="spacingAndGlyphs">109600</text>
<text x="1102" y="115" textLength="40" lengthAdjust="spacingAndGlyphs">109400</text>
<text x="1102" y="162" textLength="40" lengthAdjust="spacingAndGlyphs">109300</text>
<text x="1102" y="210" textLength="40" lengthAdjust="spacingAndGlyphs">109200</text>
<text x="1102" y="257" textLength="40" lengthAdjust="spacingAndGlyphs">109100</text>
<text x="1102" y="352" textLength="40" lengthAdjust="spacingAndGlyphs">108900</text>
<text x="1102" y="400" textLength="40" lengthAdjust="spacingAndGlyphs">108800</text>
<text x="1102" y="446" textLength="40" lengthAdjust="spacingAndGlyphs">108700</text>
<text x="1102" y="495" textLength="40" lengthAdjust="spacingAndGlyphs">108600</text>
<text x="1102" y="597" textLength="22" lengthAdjust="spacingAndGlyphs">10K</text>
<text x="1102" y="736" textLength="10" lengthAdjust="spacingAndGlyphs">-1</text>
<text x="1102" y="785">0</text>
</g>
<g font-size="14" fill="#fff" style="stroke:#fff;stroke-width:.2">
<rect x="1101" y="53" width="43" height="17" fill="#0a246a" stroke="none"/><text x="1102" y="66" textLength="40" lengthAdjust="spacingAndGlyphs">109504</text>
<rect x="1101" y="239" width="43" height="17" fill="#c9a2f2" stroke="none"/><text x="1102" y="252" textLength="40" lengthAdjust="spacingAndGlyphs">109112</text>
<rect x="1101" y="280" width="43" height="8" fill="#ff4a10" stroke="none"/>
<rect x="1101" y="287" width="43" height="15" fill="#1010ff" stroke="none"/><text x="1102" y="299" textLength="40" lengthAdjust="spacingAndGlyphs">109012</text>
<rect x="1101" y="302" width="43" height="2" fill="#ffff00" stroke="none"/>
<rect x="1101" y="304" width="43" height="16" fill="#00f000" stroke="none"/><text x="1102" y="317" textLength="40" lengthAdjust="spacingAndGlyphs">108975</text>
<rect x="1101" y="640" width="14" height="15" fill="#1010ff" stroke="none"/><text x="1101" y="653" textLength="13" lengthAdjust="spacingAndGlyphs">97</text>
<rect x="1101" y="675" width="29" height="15" fill="#1010ff" stroke="none"/>
<rect x="1101" y="690" width="29" height="3" fill="#ff00ff" stroke="none"/>
<rect x="1101" y="670" width="25" height="14" fill="#ff0000" stroke="none"/><text x="1101" y="682" textLength="25" lengthAdjust="spacingAndGlyphs">0.06</text>
<rect x="1101" y="764" width="25" height="15" fill="#ff00ff" stroke="none"/><text x="1101" y="777" textLength="25" lengthAdjust="spacingAndGlyphs">0.02</text>
</g>
<g font-size="14" fill="#1a1aff" style="stroke:#1a1aff;stroke-width:.25">
<text x="3" y="546" textLength="47" lengthAdjust="spacingAndGlyphs">Volume</text>
<text x="3" y="673" textLength="101" lengthAdjust="spacingAndGlyphs">MACD(12,26,9,C)</text>
<text x="3" y="767" textLength="108" lengthAdjust="spacingAndGlyphs">MACD(60,130,9,C)</text>
</g>
<g font-size="14" font-weight="bold">
<text x="130" y="851" textLength="31" lengthAdjust="spacingAndGlyphs">14:30</text><text x="280" y="851" textLength="31" lengthAdjust="spacingAndGlyphs">15:00</text><text x="430" y="851" textLength="31" lengthAdjust="spacingAndGlyphs">15:30</text><text x="579" y="851" textLength="31" lengthAdjust="spacingAndGlyphs">16:00</text><text x="730" y="851" textLength="31" lengthAdjust="spacingAndGlyphs">16:30</text>
</g>
</svg>

<!-- callout -->
<div style="position:absolute;left:905px;top:283px;width:200px;height:80px;box-sizing:border-box;background:#fff;border:3px solid #f00000;box-shadow:3px 3px 5px rgba(0,0,0,.55);font-size:16px;line-height:19px;padding:4px 0 0 4px;-webkit-text-stroke:.3px #000;letter-spacing:.55px">w druga strone na 1 min<br>tez pracuja</div>
</div></body></html>
